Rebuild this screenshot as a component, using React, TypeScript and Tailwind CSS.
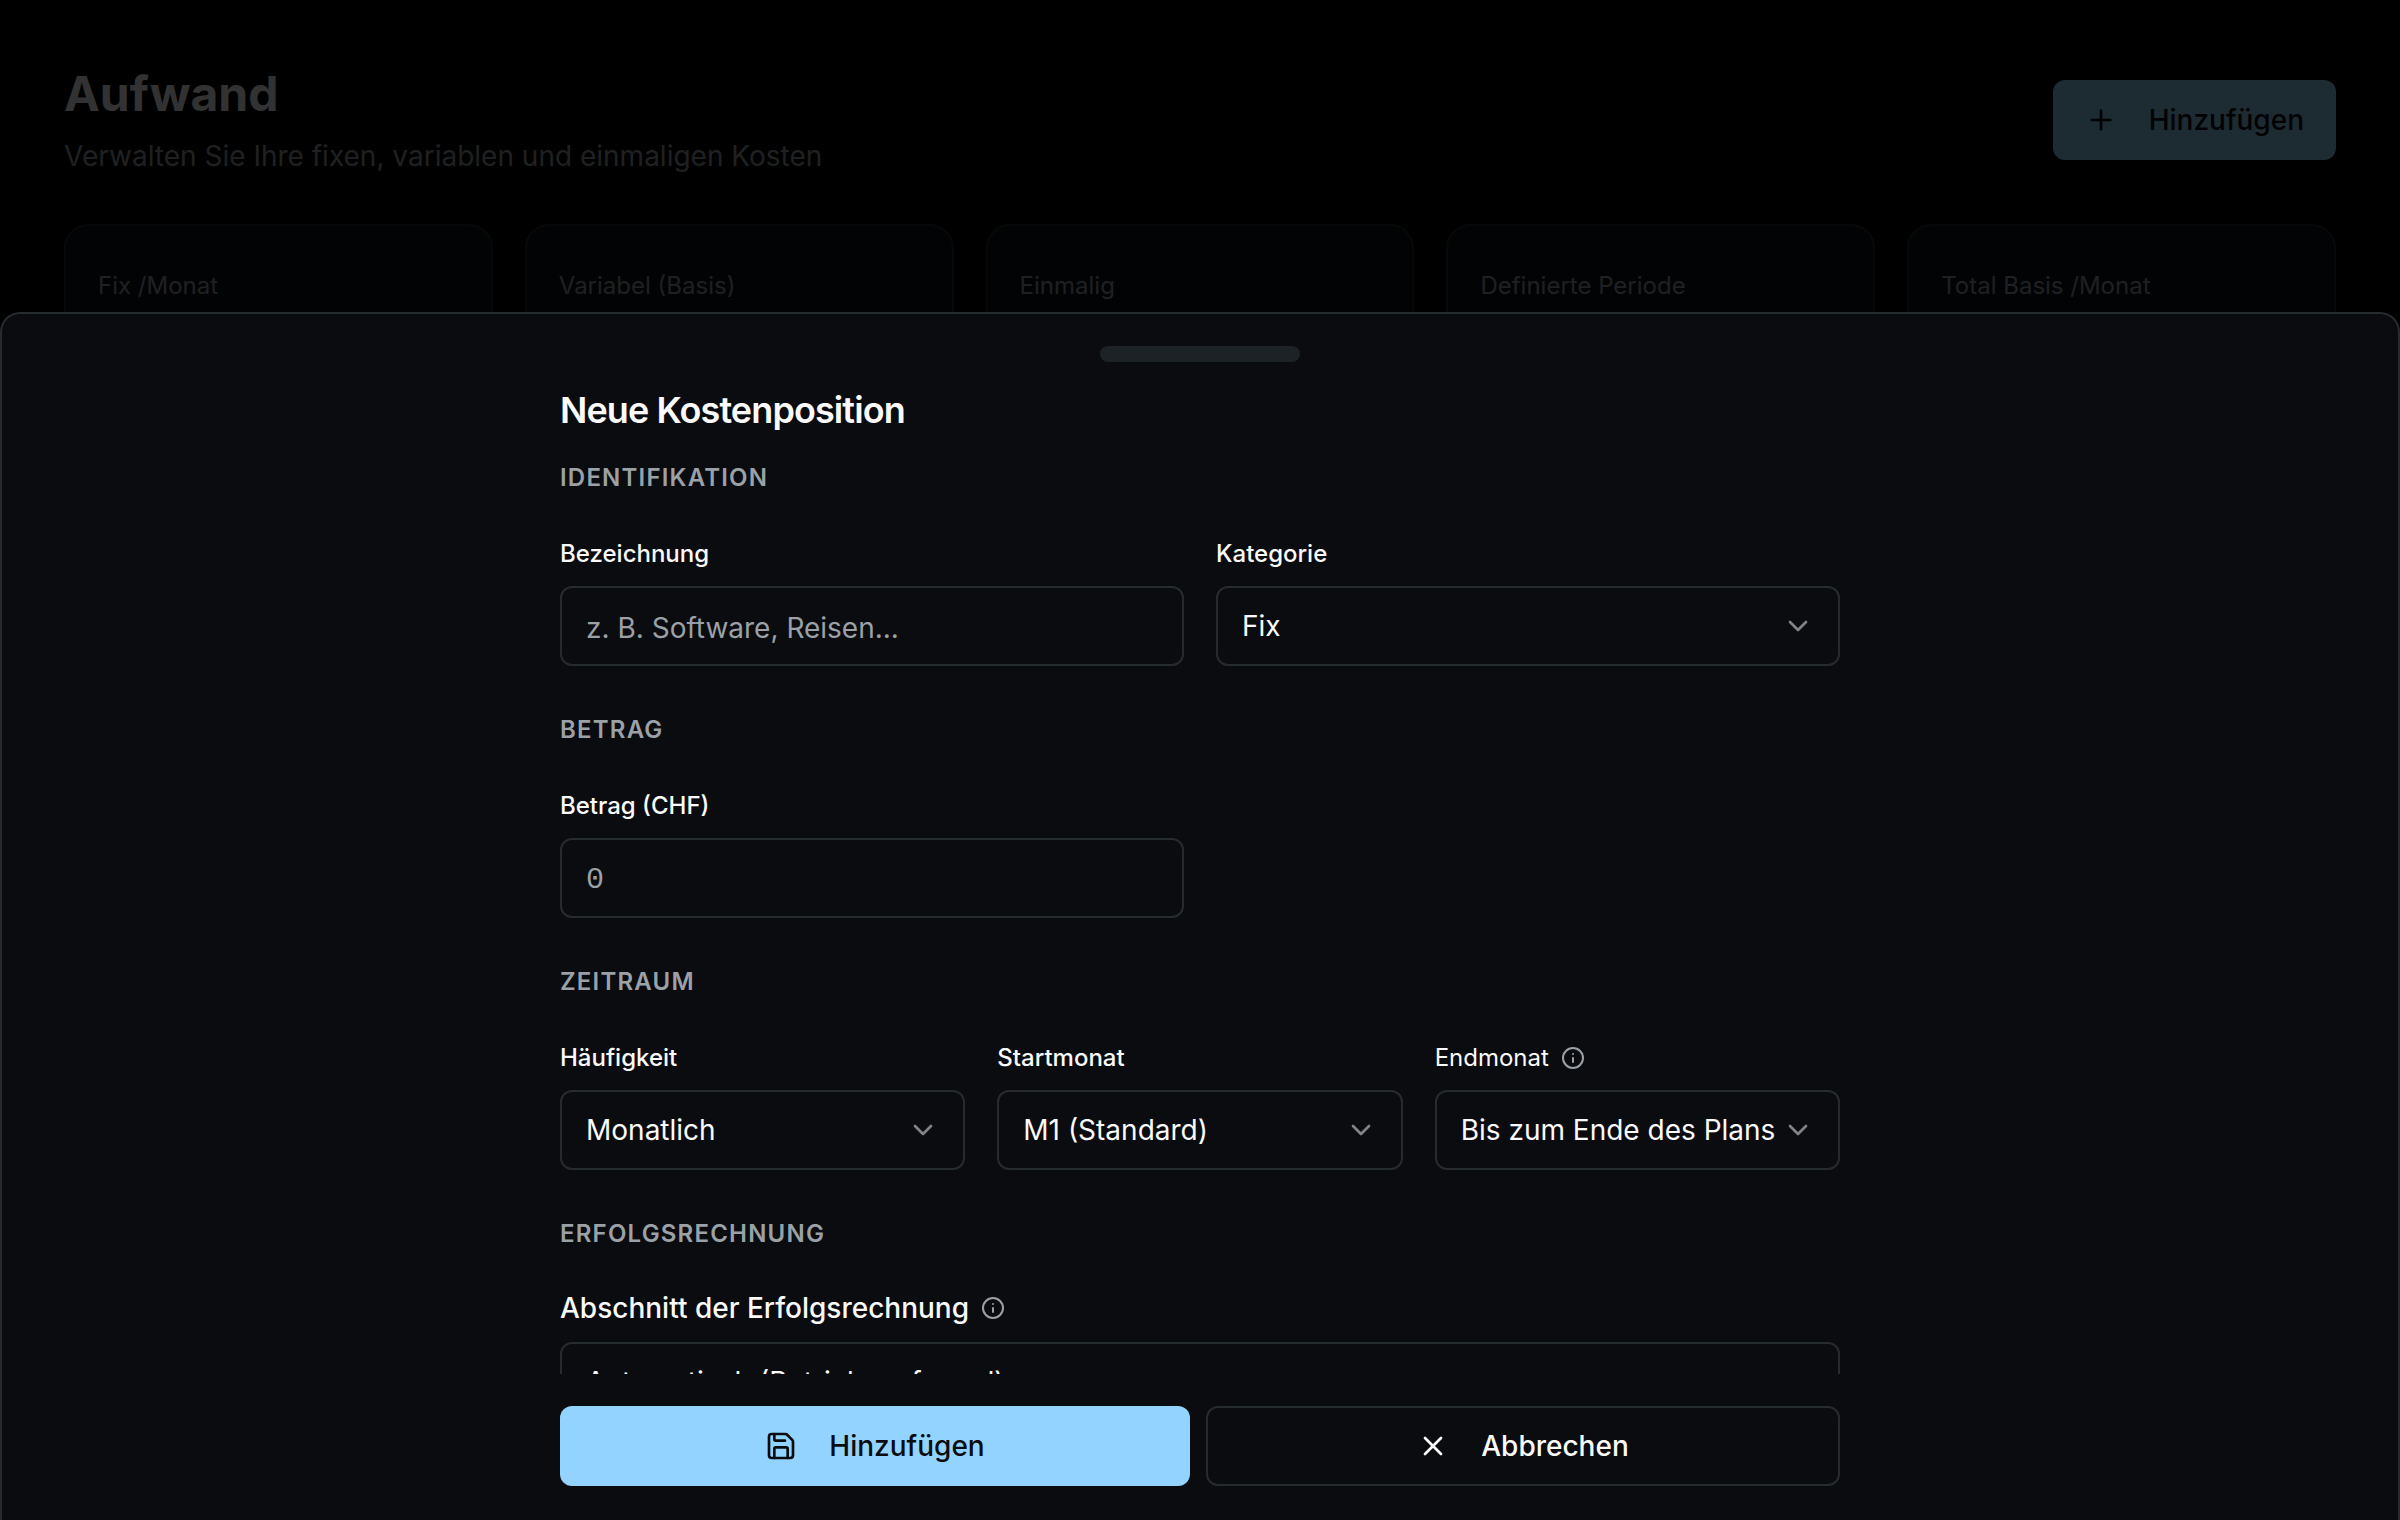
import React from "react";
import { ChevronDown, Info, Plus, Save, X } from "lucide-react";

const stats = [
  "Fix /Monat",
  "Variabel (Basis)",
  "Einmalig",
  "Definierte Periode",
  "Total Basis /Monat",
];

const fieldStyle =
  "w-full h-20 rounded-xl border-2 border-[#262b2e] bg-transparent px-6 outline-none";
const buttonStyle =
  "flex h-20 items-center justify-center gap-8 rounded-xl px-8 text-[28px] font-medium";

type FieldProps = {
  id: string;
  label: string;
  labelStyle?: string;
  info?: boolean;
  children: React.ReactNode;
};

const Field: React.FC<FieldProps> = ({
  id,
  label,
  labelStyle = "text-[24px] leading-[40px] mb-3 font-medium",
  info,
  children,
}) => (
  <div className="min-w-0">
    <div className={`flex items-center gap-3 ${labelStyle}`}>
      <label htmlFor={id}>{label}</label>
      {info && <Info className="size-6 text-[#9ba1a6]" />}
    </div>
    {children}
  </div>
);

type SelectProps = {
  id: string;
  options: string[];
};

const Select: React.FC<SelectProps> = ({ id, options }) => (
  <div className="relative">
    <select id={id} className={`${fieldStyle} appearance-none pr-14 text-[28px]`}>
      {options.map((option) => (
        <option key={option} className="bg-[#0a0c10]">
          {option}
        </option>
      ))}
    </select>
    <ChevronDown className="pointer-events-none absolute right-[26px] top-6 size-8 opacity-50" />
  </div>
);

type SectionProps = {
  title: string;
  children: React.ReactNode;
};

const Section: React.FC<SectionProps> = ({ title, children }) => (
  <section className="flex flex-col gap-10">
    <h3 className="text-[24px] leading-8 font-semibold uppercase tracking-wider text-[#9ba1a6]">
      {title}
    </h3>
    {children}
  </section>
);

const Page: React.FC = () => (
  <main className="p-16">
    <div className="flex items-center justify-between">
      <div>
        <h1 className="text-[48px] leading-[60px] font-bold">Aufwand</h1>
        <p className="mt-3 text-[28px] leading-10 text-[#9ba1a6]">
          Verwalten Sie Ihre fixen, variablen und einmaligen Kosten
        </p>
      </div>
      <button className={`${buttonStyle} bg-[#92d4ff] text-[#0a0c10]`}>
        <Plus className="size-8" />
        Hinzufügen
      </button>
    </div>
    <div className="mt-12 grid grid-cols-5 gap-8">
      {stats.map((stat) => (
        <div
          key={stat}
          className="h-60 rounded-3xl border-2 border-[#24292c] bg-[#0e131b] px-8 pt-11"
        >
          <p className="text-[24px] leading-8 text-[#9ba1a6]">{stat}</p>
        </div>
      ))}
    </div>
  </main>
);

const CostDrawer: React.FC = () => (
  <div
    role="dialog"
    aria-labelledby="drawer-title"
    className="fixed inset-x-0 top-[312px] bottom-0 flex flex-col rounded-t-[20px] border-2 border-b-0 border-[#262b2e] bg-[#0a0c10]"
  >
    <div className="mx-auto mt-8 h-4 w-[200px] shrink-0 rounded-full bg-[#1c2226]" />
    <form className="mx-auto flex min-h-0 w-full max-w-[1344px] flex-1 flex-col px-8">
      <h2
        id="drawer-title"
        className="mt-7 mb-8 text-[36px] leading-10 font-semibold tracking-tight"
      >
        Neue Kostenposition
      </h2>
      <div className="flex min-h-0 flex-1 flex-col gap-12 overflow-hidden">
        <Section title="Identifikation">
          <div className="grid grid-cols-2 gap-8">
            <Field id="name" label="Bezeichnung">
              <input
                id="name"
                type="text"
                placeholder="z. B. Software, Reisen..."
                className={`${fieldStyle} pt-1 text-[28px] placeholder:text-[#9ba1a6]`}
              />
            </Field>
            <Field id="category" label="Kategorie">
              <Select id="category" options={["Fix", "Variabel", "Einmalig"]} />
            </Field>
          </div>
        </Section>
        <Section title="Betrag">
          <div className="grid grid-cols-2 gap-8">
            <Field id="amount" label="Betrag (CHF)">
              <input
                id="amount"
                type="text"
                inputMode="decimal"
                placeholder="0"
                className={`${fieldStyle} pt-1 font-['Liberation_Mono',monospace] text-[30px] placeholder:text-[#9ba1a6]`}
              />
            </Field>
          </div>
        </Section>
        <Section title="Zeitraum">
          <div className="grid grid-cols-3 gap-8">
            <Field id="frequency" label="Häufigkeit">
              <Select id="frequency" options={["Monatlich", "Jährlich"]} />
            </Field>
            <Field id="start" label="Startmonat">
              <Select id="start" options={["M1 (Standard)", "M2", "M3"]} />
            </Field>
            <Field
              id="end"
              label="Endmonat"
              labelStyle="text-[24px] leading-[40px] mb-3"
              info
            >
              <Select id="end" options={["Bis zum Ende des Plans", "M12"]} />
            </Field>
          </div>
        </Section>
        <Section title="Erfolgsrechnung">
          <Field
            id="section"
            label="Abschnitt der Erfolgsrechnung"
            labelStyle="text-[28px] leading-9 mb-4 font-medium"
            info
          >
            <Select
              id="section"
              options={["Automatisch (Betriebsaufwand)", "Personalaufwand"]}
            />
          </Field>
        </Section>
      </div>
      <div className="flex gap-4 pt-8 pb-[34px]">
        <button
          type="submit"
          className={`${buttonStyle} flex-1 bg-[#92d4ff] text-[#0a0c10]`}
        >
          <Save className="size-8" />
          Hinzufügen
        </button>
        <button
          type="button"
          className={`${buttonStyle} flex-1 border-2 border-[#262b2e]`}
        >
          <X className="size-8" />
          Abbrechen
        </button>
      </div>
    </form>
  </div>
);

export default function App() {
  return (
    <div className="h-screen overflow-hidden bg-black font-['Inter',sans-serif] text-[#fafafa]">
      <Page />
      <div className="fixed inset-0 bg-black/80" />
      <CostDrawer />
    </div>
  );
}
